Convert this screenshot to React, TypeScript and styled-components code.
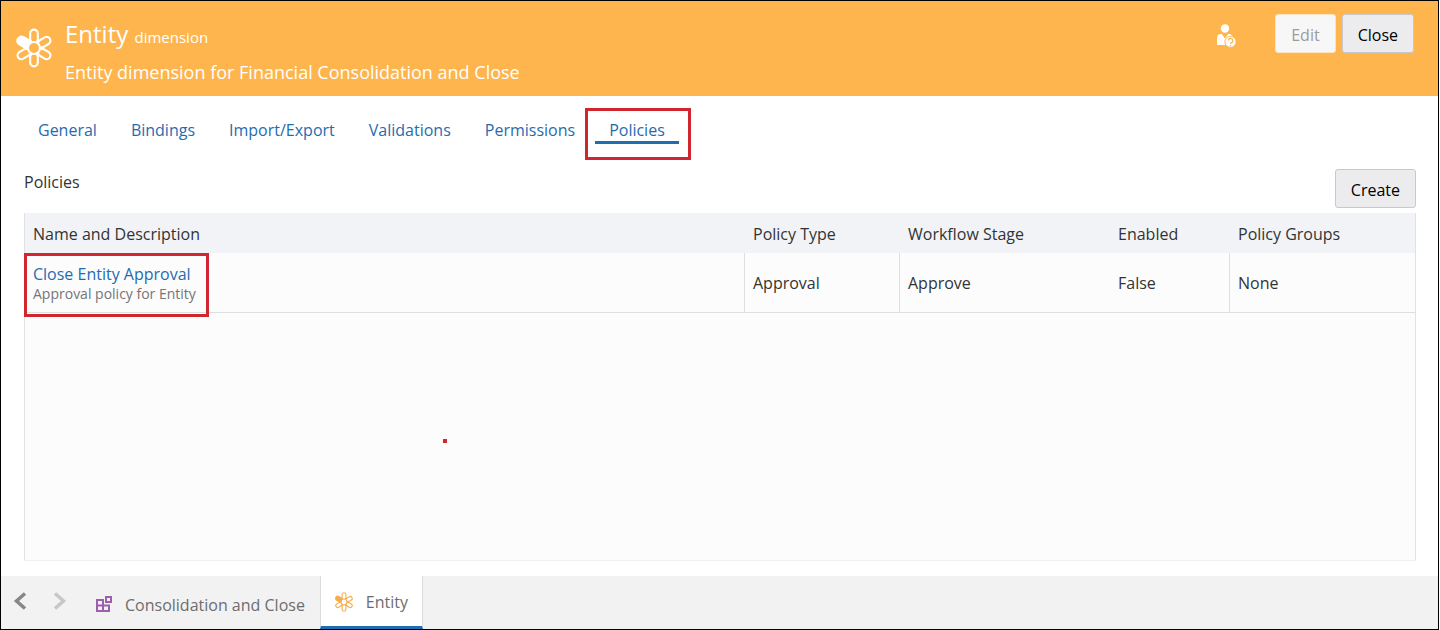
import React from 'react';
import styled, { createGlobalStyle, css } from 'styled-components';

const GlobalStyle = createGlobalStyle`
  *, *::before, *::after { box-sizing: border-box; }
  body {
    margin: 0;
    background: #fff;
    color: #333;
    font-family: "Open Sans", "Noto Sans", sans-serif;
    font-size: 16px;
    line-height: 24px;
  }
  button { font: inherit; }
  h1, h2, p { margin: 0; font-weight: 400; }
`;

const Frame = styled.div`
  display: flex;
  flex-direction: column;
  min-height: 100vh;
  margin-right: 1px;
  border: 1px solid #000;
`;

const Header = styled.header`
  display: flex;
  align-items: flex-start;
  height: 95px;
  padding: 13px 24px 0 13px;
  background: #ffb54d;
  color: #fff;
`;

const HeaderIcon = styled.span`
  display: flex;
  width: 51px;
  padding-top: 14px;
`;

const Titles = styled.div`
  flex: 1;
`;

const Title = styled.h1`
  font-size: 24px;
  line-height: 40px;
`;

const Kind = styled.small`
  font-size: 15px;
`;

const Subtitle = styled.p`
  font-size: 18px;
  line-height: 30px;
`;

const Button = styled.button`
  height: 39px;
  padding: 2px 15px 0;
  border: 1px solid #c9c9cb;
  border-radius: 3px;
  background: #ececee;
  color: #000;
  &:disabled {
    border-color: #fbe3c0;
    background: #f7f7f8;
    color: #9c9c9e;
  }
`;

const Actions = styled.div`
  display: flex;
  align-items: flex-start;
  gap: 6px;
`;

const IconButton = styled.button`
  display: flex;
  margin-right: 32px;
  padding: 10px 0 0;
  border: 0;
  background: none;
`;

const Tabs = styled.nav`
  display: flex;
  gap: 6px;
  padding: 20px 23px 0;
`;

const Tab = styled.a<{ $active?: boolean }>`
  position: relative;
  padding: 3px 14px 0;
  border-bottom: 3px solid ${(p) => (p.$active ? '#1f6cb0' : 'transparent')};
  line-height: 22px;
  color: #1f6cae;
  text-decoration: none;
`;

const outline = css`
  position: absolute;
  border: 3px solid #d0262f;
  pointer-events: none;
`;

const TabOutline = styled.span`
  ${outline}
  inset: -8px -12px -19px -10px;
`;

const Section = styled.main`
  display: flex;
  flex: 1;
  flex-direction: column;
  padding: 25px 22px 15px 23px;
`;

const SectionHead = styled.div`
  display: flex;
  align-items: flex-start;
  justify-content: space-between;
  margin-bottom: 5px;
`;

const SectionTitle = styled.h2`
  padding-top: 1px;
  font-size: 16px;
`;

const Grid = styled.div`
  position: relative;
  flex: 1;
  border: 1px solid #e1e2e4;
  border-top: 0;
  border-bottom-color: #f0f0f2;
  background: #fcfcfd;
`;

const Table = styled.table`
  width: 100%;
  border-collapse: separate;
  border-spacing: 0;
  table-layout: fixed;
`;

const Th = styled.th<{ $width?: number }>`
  width: ${(p) => (p.$width ? `${p.$width}px` : 'auto')};
  height: 40px;
  padding: 2px 8px 0;
  background: #f2f3f7;
  font-weight: 400;
  text-align: left;
`;

const Td = styled.td<{ $line?: boolean }>`
  position: relative;
  height: 60px;
  padding: 0 8px;
  border-bottom: 1px solid #dedfe1;
  border-right: ${(p) => (p.$line ? '1px solid #dedfe1' : '0')};
`;

const PolicyLink = styled.a`
  display: block;
  line-height: 22px;
  color: #1f6cae;
  text-decoration: none;
`;

const Description = styled.p`
  font-size: 14px;
  line-height: 18px;
  color: #757577;
`;

const RowOutline = styled.span`
  ${outline}
  top: 0;
  left: -1px;
  width: 185px;
  height: 64px;
`;

const Marker = styled.span`
  position: absolute;
  top: 226px;
  left: 418px;
  width: 4px;
  height: 4px;
  background: #d0262f;
`;

const Footer = styled.footer`
  display: flex;
  height: 53px;
  background: #f2f2f2;
`;

const Arrow = styled.button`
  display: flex;
  width: 40px;
  padding: 16px 0 0 12px;
  border: 0;
  background: none;
`;

const OpenItem = styled.a<{ $active?: boolean }>`
  display: flex;
  align-items: center;
  gap: 12px;
  padding: 4px 15px 0 14px;
  color: #6d6d6f;
  text-decoration: none;
  ${(p) =>
    p.$active &&
    css`
      padding: 2px 14px 0 13px;
      border: 1px solid #dcdcde;
      border-width: 0 1px 3px;
      border-bottom-color: #1f6cb0;
      background: #fff;
    `}
`;

function Flower({ size, color, stroke }: { size: number; color: string; stroke: number }) {
  return (
    <svg width={size} height={size} viewBox="0 0 40 40" fill="none" stroke={color} strokeWidth={stroke} aria-hidden="true">
      <circle cx="20" cy="20" r="6" />
      {[0, 60, 120, 180, 240].map((a) => (
        <path
          key={a}
          d="M17.6 14 L16.2 12.2 V5.4 A3.8 3.8 0 0 1 23.8 5.4 V12.2 L22.4 14"
          transform={`rotate(${a} 20 20)`}
        />
      ))}
      <path
        d="M17.4 14.4 L15.8 11.6 V5.6 A4.2 4.2 0 0 1 24.2 5.6 V11.6 L22.6 14.4"
        fill={color}
        transform="rotate(300 20 20)"
      />
    </svg>
  );
}

function UserHelp() {
  return (
    <svg width="20" height="24" viewBox="0 0 20 24" aria-hidden="true">
      <circle cx="8" cy="4.5" r="4.2" fill="#fff" />
      <path d="M0 21V14q0-4 4-4h.8l3.200 4.500 3.200-4.500h1q2.800 0 3.800 3.500V21z" fill="#fff" />
      <circle cx="13.500" cy="17.800" r="5.600" fill="#fff" stroke="#ffb54d" strokeWidth="1" />
      <path d="M11.400 16.600a2.200 2.200 0 1 1 3.200 2l-1 .7v.8M13.400 21v1.200" fill="none" stroke="#ffb54d" strokeWidth="1.300" />
    </svg>
  );
}

function Blocks() {
  return (
    <svg width="18" height="18" viewBox="-1 0 18 18" fill="none" stroke="#9c5fae" strokeWidth="2" aria-hidden="true">
      <path d="M1 4h6v11H1zM1 9.500h12V15H1zM10 1h5v5h-5z" />
    </svg>
  );
}

function Chevron({ left, color }: { left?: boolean; color: string }) {
  return (
    <svg width="14" height="18" viewBox="0 0 14 18" fill="none" stroke={color} strokeWidth="3.500" aria-hidden="true">
      <path d={left ? 'M12 1.500 3.500 9l8.500 7.500' : 'M2 1.500 10.500 9 2 16.500'} />
    </svg>
  );
}

const tabs = ['General', 'Bindings', 'Import/Export', 'Validations', 'Permissions', 'Policies'];

export default function App() {
  return (
    <>
      <GlobalStyle />
      <Frame>
        <Header>
          <HeaderIcon>
            <Flower size={40} color="#fff" stroke={2.1} />
          </HeaderIcon>
          <Titles>
            <Title>
              Entity <Kind>dimension</Kind>
            </Title>
            <Subtitle>Entity dimension for Financial Consolidation and Close</Subtitle>
          </Titles>
          <Actions>
            <IconButton aria-label="Data access">
              <UserHelp />
            </IconButton>
            <Button disabled>Edit</Button>
            <Button>Close</Button>
          </Actions>
        </Header>
        <Tabs>
          {tabs.map((t) => (
            <Tab key={t} href="#" $active={t === 'Policies'}>
              {t}
              {t === 'Policies' && <TabOutline />}
            </Tab>
          ))}
        </Tabs>
        <Section>
          <SectionHead>
            <SectionTitle>Policies</SectionTitle>
            <Button>Create</Button>
          </SectionHead>
          <Grid>
            <Table>
              <thead>
                <tr>
                  <Th>Name and Description</Th>
                  <Th $width={155}>Policy Type</Th>
                  <Th $width={210}>Workflow Stage</Th>
                  <Th $width={120}>Enabled</Th>
                  <Th $width={185}>Policy Groups</Th>
                </tr>
              </thead>
              <tbody>
                <tr>
                  <Td $line>
                    <PolicyLink href="#">Close Entity Approval</PolicyLink>
                    <Description>Approval policy for Entity</Description>
                    <RowOutline />
                  </Td>
                  <Td $line>Approval</Td>
                  <Td>Approve</Td>
                  <Td $line>False</Td>
                  <Td>None</Td>
                </tr>
              </tbody>
            </Table>
            <Marker />
          </Grid>
        </Section>
        <Footer>
          <Arrow aria-label="Previous">
            <Chevron left color="#858789" />
          </Arrow>
          <Arrow aria-label="Next" disabled>
            <Chevron color="#c6c7c9" />
          </Arrow>
          <OpenItem href="#">
            <Blocks />
            Consolidation and Close
          </OpenItem>
          <OpenItem href="#" $active>
            <Flower size={20} color="#f5ae4e" stroke={2.2} />
            Entity
          </OpenItem>
        </Footer>
      </Frame>
    </>
  );
}
